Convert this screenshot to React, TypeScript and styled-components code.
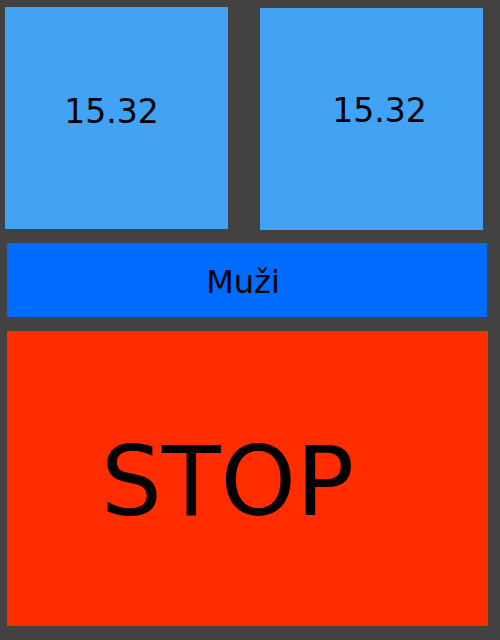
import React from "react";
import styled, { createGlobalStyle } from "styled-components";

const GlobalStyle = createGlobalStyle`
  * { box-sizing: border-box; }
  body { margin: 0; background: #434240; }
`;

const Screen = styled.main`
  display: flex;
  flex-direction: column;
  gap: 14px;
  min-height: 100vh;
  padding: 7px 12px 14px 7px;
  font-family: Verdana, "DejaVu Sans", sans-serif;
  color: #000;
`;

const LaneRow = styled.div`
  display: grid;
  grid-template-columns: 1fr 1fr;
  gap: 32px;
  margin: 0 5px -1px -2px;
`;

const PanelButton = styled.button`
  display: flex;
  align-items: center;
  justify-content: center;
  border: 0;
  margin: 0;
  padding: 0;
  color: inherit;
  font-family: inherit;
  cursor: pointer;
`;

const LaneButton = styled(PanelButton)<{ $low?: boolean }>`
  height: 222px;
  margin-top: ${(p) => (p.$low ? "1px" : "0")};
  padding: ${(p) => (p.$low ? "0 0 18px 16px" : "0 10px 14px 0")};
  background: #42a2f4;
  font-size: 33px;
`;

const CategoryButton = styled(PanelButton)`
  height: 74px;
  margin-right: 1px;
  padding: 4px 8px 0 0;
  background: #006cff;
  font-size: 32px;
`;

const StopButton = styled(PanelButton)`
  flex: 1;
  min-height: 160px;
  padding: 6px 40px 0 0;
  background: #ff2d00;
  font-size: 96px;
  font-kerning: none;
`;

export default function App() {
  return (
    <>
      <GlobalStyle />
      <Screen>
        <LaneRow>
          <LaneButton type="button">15.32</LaneButton>
          <LaneButton type="button" $low>15.32</LaneButton>
        </LaneRow>
        <CategoryButton type="button">Muži</CategoryButton>
        <StopButton type="button">STOP</StopButton>
      </Screen>
    </>
  );
}
